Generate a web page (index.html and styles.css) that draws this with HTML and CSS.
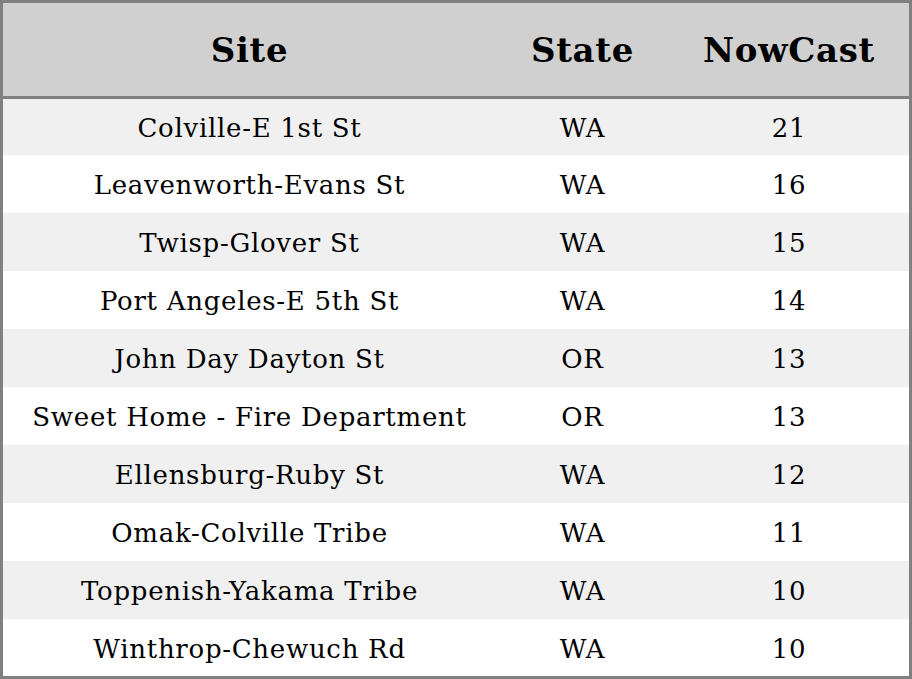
FILE: index.html
```html
<!DOCTYPE html>
<html>
<head>
<meta charset="utf-8">
<link rel="stylesheet" href="styles.css">
</head>
<body>
<table class="aq">
  <colgroup>
    <col class="c-site"><col class="c-state"><col class="c-now">
  </colgroup>
  <thead>
    <tr class="head"><th>Site</th><th>State</th><th>NowCast</th></tr>
  </thead>
  <tbody>
    <tr class="r first odd"><td>Colville-E 1st St</td><td>WA</td><td>21</td></tr>
    <tr class="r"><td>Leavenworth-Evans St</td><td>WA</td><td>16</td></tr>
    <tr class="r odd"><td>Twisp-Glover St</td><td>WA</td><td>15</td></tr>
    <tr class="r"><td>Port Angeles-E 5th St</td><td>WA</td><td>14</td></tr>
    <tr class="r odd"><td>John Day Dayton St</td><td>OR</td><td>13</td></tr>
    <tr class="r"><td>Sweet Home - Fire Department</td><td>OR</td><td>13</td></tr>
    <tr class="r odd"><td>Ellensburg-Ruby St</td><td>WA</td><td>12</td></tr>
    <tr class="r"><td>Omak-Colville Tribe</td><td>WA</td><td>11</td></tr>
    <tr class="r odd"><td>Toppenish-Yakama Tribe</td><td>WA</td><td>10</td></tr>
    <tr class="r last"><td>Winthrop-Chewuch Rd</td><td>WA</td><td>10</td></tr>
  </tbody>
</table>
</body>
</html>
```
FILE: styles.css
```css
html, body {
  margin: 0;
  padding: 0;
  background: #ffffff;
}
.aq {
  width: 912px;
  border: 3px solid #808080;
  border-spacing: 0;
  border-collapse: separate;
  table-layout: fixed;
  font-family: "DejaVu Serif", serif;
  color: #000;
}
.c-site { width: 493px; }
.c-state { width: 173px; }
.c-now { width: 240px; }
.aq th, .aq td {
  padding: 0;
  text-align: center;
  vertical-align: middle;
  white-space: nowrap;
}
.head th {
  height: 93px;
  background: #d0d0d0;
  font-size: 34px;
  font-weight: bold;
  letter-spacing: 0.7px;
  border-bottom: 3px solid #808080;
}
.r td {
  height: 56px;
  padding-top: 2px;
  font-size: 26px;
  letter-spacing: 0.72px;
  background: #ffffff;
}
.r.odd td { background: #f0f0f0; }
.r.first td { height: 54px; }
.r.last td { height: 55px; }
```
